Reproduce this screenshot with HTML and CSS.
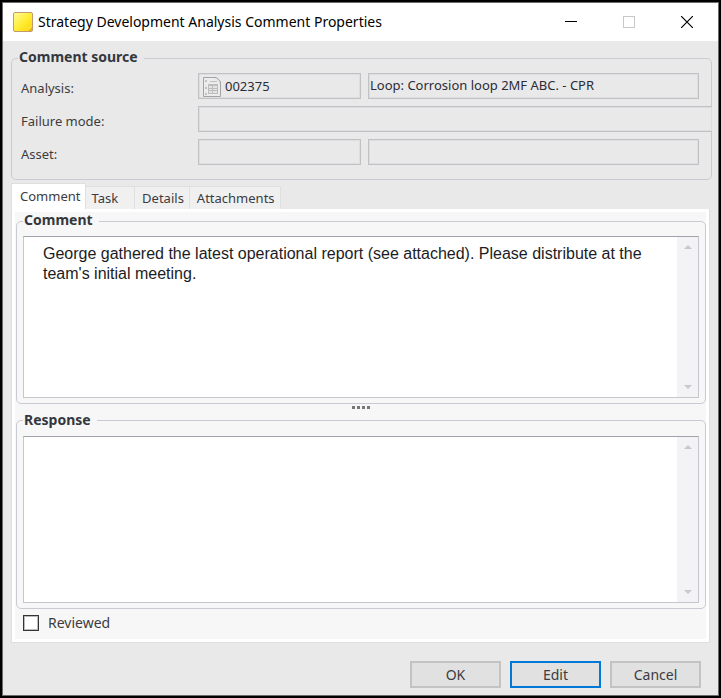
FILE: index.html
```html
<!DOCTYPE html>
<html lang="en">
<head>
<meta charset="utf-8">
<title>Strategy Development Analysis Comment Properties</title>
<link rel="stylesheet" href="styles.css">
</head>
<body>
<div class="window">
  <header class="titlebar">
    <svg class="app-icon" width="20" height="20" viewBox="0 0 20 20" aria-hidden="true">
      <defs>
        <linearGradient id="note" x1="0" y1="0" x2="1" y2="1">
          <stop offset="0" stop-color="#fffb9c"/>
          <stop offset=".5" stop-color="#ffee38"/>
          <stop offset="1" stop-color="#f8d200"/>
        </linearGradient>
      </defs>
      <rect x=".5" y=".5" width="19" height="19" rx="1.5" fill="url(#note)" stroke="#c09a70"/>
      <path d="M14 19Q18 18 19 14V19Z" fill="#f0b400"/>
      <path d="M14 18.500Q16 17 16 16Q18 16 18.500 14" fill="none" stroke="#ffe95c"/>
    </svg>
    <h1 class="title">Strategy Development Analysis Comment Properties</h1>
    <div class="caption-buttons">
      <button class="caption" type="button" aria-label="Minimize">
        <svg width="12" height="12" viewBox="0 0 12 12"><path d="M0 5.500H12" stroke="#000"/></svg>
      </button>
      <button class="caption" type="button" aria-label="Maximize" disabled>
        <svg width="12" height="12" viewBox="0 0 12 12"><rect x=".5" y=".5" width="11" height="11" fill="none" stroke="#c8c8c8"/></svg>
      </button>
      <button class="caption" type="button" aria-label="Close">
        <svg width="12" height="12" viewBox="0 0 12 12"><path d="M0 0L12 12M12 0L0 12" stroke="#000" stroke-width="1.200"/></svg>
      </button>
    </div>
  </header>

  <form class="content">
    <fieldset class="group source">
      <legend>Comment source</legend>
      <div class="row">
        <label for="analysis">Analysis:</label>
        <div class="field with-icon">
          <svg width="18" height="20" viewBox="0 0 18 20" aria-hidden="true">
            <path d="M.5 .5H13.500L17.500 4.500V19.500H.5Z" fill="#ececec" stroke="#a4a4a4"/>
            <path d="M13 1L17 5V7Q16 3 12 1Z" fill="#bcbcbc"/>
            <path d="M3 3V5M3 10V12M3 16V18" stroke="#999"/>
            <path d="M7 4.500H14" stroke="#c0c0c0"/>
            <rect x="5" y="7" width="10" height="10" fill="#bdbdbd"/>
            <path d="M6 9H9V11H6ZM10 9H14V11H10ZM6 12H9V13H6ZM10 12H14V13H10ZM6 14H9V16H6ZM10 14H14V16H10Z" fill="#e4e4e4"/>
          </svg>
          <input id="analysis" type="text" value="002375" readonly>
        </div>
        <input class="field" type="text" aria-label="Analysis description" value="Loop: Corrosion loop 2MF ABC. - CPR" readonly>
      </div>
      <div class="row">
        <label for="failure">Failure mode:</label>
        <input class="field wide" id="failure" type="text" readonly>
      </div>
      <div class="row">
        <label for="asset">Asset:</label>
        <input class="field" id="asset" type="text" readonly>
        <input class="field" type="text" aria-label="Asset description" readonly>
      </div>
    </fieldset>

    <div class="tabs" role="tablist">
      <button class="tab active" type="button" role="tab" aria-selected="true">Comment</button>
      <button class="tab task" type="button" role="tab" aria-selected="false">Task</button>
      <button class="tab" type="button" role="tab" aria-selected="false">Details</button>
      <button class="tab" type="button" role="tab" aria-selected="false">Attachments</button>
    </div>

    <div class="panel" role="tabpanel">
      <fieldset class="group memo">
        <legend>Comment</legend>
        <div class="memo-box">
          <textarea aria-label="Comment" readonly>George gathered the latest operational report (see attached). Please distribute at the team's initial meeting.</textarea>
          <div class="scroll" aria-hidden="true">
            <svg width="8" height="4" viewBox="0 0 8 4"><path d="M0 4L4 0L8 4Z"/></svg>
            <svg width="8" height="4" viewBox="0 0 8 4"><path d="M0 0L4 4L8 0Z"/></svg>
          </div>
        </div>
      </fieldset>
      <div class="splitter"><i></i><i></i><i></i><i></i></div>
      <fieldset class="group memo">
        <legend>Response</legend>
        <div class="memo-box">
          <textarea aria-label="Response" readonly></textarea>
          <div class="scroll" aria-hidden="true">
            <svg width="8" height="4" viewBox="0 0 8 4"><path d="M0 4L4 0L8 4Z"/></svg>
            <svg width="8" height="4" viewBox="0 0 8 4"><path d="M0 0L4 4L8 0Z"/></svg>
          </div>
        </div>
      </fieldset>
      <label class="check"><input type="checkbox">Reviewed</label>
    </div>

    <footer class="actions">
      <button class="btn" type="button">OK</button>
      <button class="btn primary" type="button">Edit</button>
      <button class="btn" type="button">Cancel</button>
    </footer>
  </form>
</div>
</body>
</html>
```
FILE: styles.css
```css
* { box-sizing: border-box; }

body {
  margin: 0;
  background: #000;
  padding: 2px;
  font: 13px/18px "Noto Sans", "Open Sans", sans-serif;
  color: #3c3c40;
}

button, input, textarea { font: inherit; color: inherit; margin: 0; }

.window {
  display: flex;
  flex-direction: column;
  min-height: calc(100vh - 4px);
  border: 1px solid #6a6a6a;
  background: #e9e9e9;
}

.titlebar {
  display: flex;
  align-items: center;
  height: 38px;
  padding: 0 2px 0 10px;
  background: #fff;
}

.title {
  flex: 1;
  margin: 0 0 0 5px;
  font: 14px/20px "Noto Sans", "Open Sans", sans-serif;
  color: #000;
}

.caption-buttons { display: flex; }

.caption {
  display: flex;
  align-items: center;
  justify-content: center;
  width: 58px;
  height: 38px;
  padding: 0;
  border: 0;
  background: none;
}

.content {
  flex: 1;
  display: flex;
  flex-direction: column;
  padding: 7px 6px 7px 8px;
}

.group {
  min-width: 0;
  margin: 0;
  border: 1px solid #c8cbd1;
  border-radius: 5px;
}

.group legend {
  margin: 0;
  padding: 0 6px 2px 1px;
  font-size: 14px;
  font-weight: 700;
  line-height: 18px;
  color: #34383e;
}

.source {
  display: flex;
  flex-direction: column;
  gap: 7px;
  padding: 5px 12px 14px 9px;
}

.source legend { margin-left: -3px; }

.row {
  display: grid;
  grid-template-columns: 177px 163px 1fr;
  height: 26px;
}

.row label { padding-top: 6px; }

.field {
  min-width: 0;
  height: 26px;
  border: 1px solid #c0c1c5;
  box-shadow: inset 0 0 0 1px #dddee0;
  background: #e9e9e9;
  padding: 0 1px 3px;
  border-radius: 0;
  outline: 0;
  color: #2b2b36;
}

.row .field:nth-child(3) { margin-left: 7px; }

.field.wide {
  grid-column: 2 / 4;
  margin-right: -13px;
  border-right: 0;
}

.with-icon {
  display: flex;
  align-items: flex-start;
  gap: 4px;
  padding: 3px 1px 0 4px;
}

.with-icon svg { flex: none; }

.with-icon input {
  flex: 1;
  min-width: 0;
  height: 18px;
  padding: 0;
  border: 0;
  outline: 0;
  background: none;
}

.tabs {
  display: flex;
  align-items: flex-end;
  margin-top: 3px;
}

.tab {
  height: 23px;
  padding: 0 5px 0 7px;
  border: 1px solid #dfdfdf;
  border-left: 0;
  border-bottom: 0;
  background: #f0f0f0;
}

.tab.task { padding: 0 16px 0 5px; }

.tab.active {
  height: 26px;
  padding: 0 5px 2px 8px;
  border-left: 1px solid #dfdfdf;
  background: #fff;
}

.panel {
  flex: 1;
  display: flex;
  flex-direction: column;
  margin-right: 2px;
  border: 1px solid #dfdfdf;
  border-top: 0;
  background: #f7f7f7;
  box-shadow: inset 0 0 0 3px #fff;
  padding: 2px 3px 10px 4px;
}

.memo {
  flex: 182 1 0;
  display: flex;
  padding: 5px 6px;
}

.memo + .splitter + .memo { flex-grow: 188; }

.memo-box {
  flex: 1;
  display: flex;
  min-width: 0;
  border: 1px solid #c6c7ce;
  border-top-color: #a0a3ac;
  background: #fff;
}

.memo textarea {
  flex: 1;
  min-width: 0;
  padding: 7px 0 0 19px;
  border: 0;
  outline: 0;
  resize: none;
  overflow: hidden;
  background: none;
  font: 16px/20px "Liberation Sans", Arial, sans-serif;
  color: #1c1c24;
}

.scroll {
  display: flex;
  flex-direction: column;
  justify-content: space-between;
  align-items: center;
  width: 21px;
  padding: 8px 0;
  background: #f3f3f5;
  fill: #c9c9cc;
}

.splitter {
  display: flex;
  justify-content: center;
  gap: 2px;
  height: 7px;
  padding-top: 2px;
}

.splitter i {
  width: 3px;
  height: 3px;
  background: #777;
}

.check {
  display: flex;
  align-items: center;
  align-self: flex-start;
  gap: 9px;
  margin: 5px 0 0 7px;
  font-size: 14px;
}

.check input {
  appearance: none;
  width: 16px;
  height: 16px;
  border: 1px solid #333;
  outline: 1px solid #bbb;
  outline-offset: -2px;
  background: #fff;
}

.actions {
  display: flex;
  justify-content: flex-end;
  gap: 9px;
  margin: 18px 11px 0 0;
}

.btn {
  width: 91px;
  height: 27px;
  padding: 0;
  border: 2px solid #c3c3c3;
  background: #e1e1e1;
  font-size: 14px;
}

.btn.primary { border-color: #0078d7; }
```
